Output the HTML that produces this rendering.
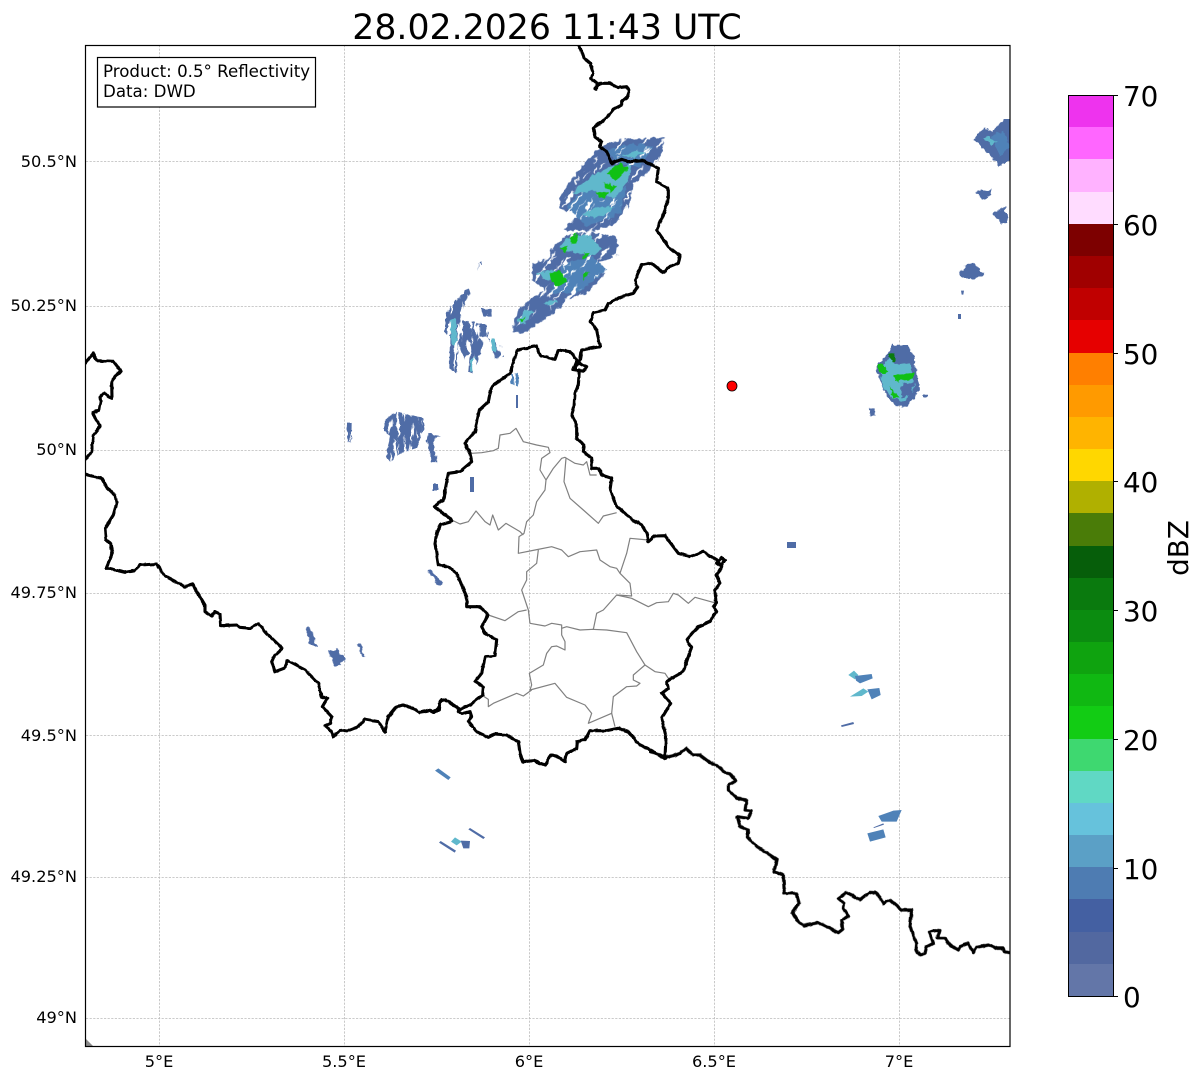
<!DOCTYPE html>
<html><head><meta charset="utf-8"><style>
html,body{margin:0;padding:0;background:#fff}
svg{display:block}
text{font-family:"DejaVu Sans","Liberation Sans",sans-serif;fill:#000}
.b{fill:none;stroke:#000;stroke-width:3.1;stroke-linejoin:round;stroke-linecap:round;vector-effect:non-scaling-stroke}
.g{fill:none;stroke:#808080;stroke-width:1.2;stroke-linejoin:round;vector-effect:non-scaling-stroke}
.t{font-size:16.2px}
.l{font-size:16.65px}
.c{font-size:27.8px}
.r1{fill:#4f6ca6}.r2{fill:#4f82b8}.r3{fill:#60b8cc}.r4{fill:#3ed870}.r5{fill:#10c014}.r6{fill:#0a7a0e}
</style></head><body>
<svg width="1202" height="1081" viewBox="0 0 1202 1081" xmlns="http://www.w3.org/2000/svg">
<defs>
<clipPath id="p"><rect x="86" y="45" width="924" height="1001"/></clipPath>
<filter id="j" filterUnits="userSpaceOnUse" x="0" y="0" width="1202" height="1081" color-interpolation-filters="sRGB">
<feTurbulence type="fractalNoise" baseFrequency="0.16 0.22" numOctaves="2" seed="4" result="n"/>
<feDisplacementMap in="SourceGraphic" in2="n" scale="6" xChannelSelector="R" yChannelSelector="G"/>
</filter>
<filter id="w" filterUnits="userSpaceOnUse" x="0" y="0" width="1202" height="1081" color-interpolation-filters="sRGB">
<feTurbulence type="fractalNoise" baseFrequency="0.16" numOctaves="2" seed="9" result="n"/>
<feDisplacementMap in="SourceGraphic" in2="n" scale="2.2" xChannelSelector="R" yChannelSelector="G"/>
<feGaussianBlur stdDeviation="0.35"/>
</filter>
<filter id="s" filterUnits="userSpaceOnUse" x="-1500" y="-1500" width="4000" height="4000" color-interpolation-filters="sRGB">
<feTurbulence type="fractalNoise" baseFrequency="0.05 0.3" numOctaves="2" seed="7" result="n"/>
<feColorMatrix in="n" type="matrix" values="0 0 0 0 0 0 0 0 0 0 0 0 0 0 0 16 0 0 0 -5.1" result="m"/>
<feComposite in="SourceGraphic" in2="m" operator="in" result="c"/>
<feTurbulence type="fractalNoise" baseFrequency="0.25" seed="3" result="d"/>
<feDisplacementMap in="c" in2="d" scale="6" xChannelSelector="R" yChannelSelector="G"/>
</filter>
<filter id="v" filterUnits="userSpaceOnUse" x="0" y="0" width="1202" height="1081" color-interpolation-filters="sRGB">
<feTurbulence type="fractalNoise" baseFrequency="0.3 0.05" numOctaves="2" seed="12" result="n"/>
<feColorMatrix in="n" type="matrix" values="0 0 0 0 0 0 0 0 0 0 0 0 0 0 0 16 0 0 0 -5.8" result="m"/>
<feComposite in="SourceGraphic" in2="m" operator="in" result="c"/>
<feTurbulence type="fractalNoise" baseFrequency="0.25" seed="5" result="d"/>
<feDisplacementMap in="c" in2="d" scale="4" xChannelSelector="R" yChannelSelector="G"/>
</filter>
</defs>
<rect width="1202" height="1081" fill="#fff"/>

<text x="547" y="39" style="font-size:34.7px" text-anchor="middle">28.02.2026 11:43 UTC</text>

<!-- grid -->
<g stroke="#bbb" stroke-width="0.8" stroke-dasharray="2.2 1.4" fill="none">
<path d="M159.500 45V1046M344.500 45V1046M529.500 45V1046M714.500 45V1046M899.500 45V1046"/>
<path d="M86 161.500H1010M86 306.500H1010M86 450.500H1010M86 593.500H1010M86 735.500H1010M86 877.500H1010M86 1018.500H1010"/>
</g>

<g clip-path="url(#p)">
<polygon points="85,1038 93,1046 85,1046" fill="#8a8a8a"/>
<!-- radar: main band, streaked along its axis -->
<g transform="rotate(-55 560 250)" filter="url(#s)">
<g transform="rotate(55 560 250)">
<g transform="translate(420,130) scale(.33333)">
<polygon class="r1" points="420,200 445,160 515,75 560,40 630,25 680,25 735,20 720,80 690,120 640,160 625,240 590,280 520,305 430,300 480,250 420,240"/>
<polygon class="r1" points="400,350 440,315 510,305 590,320 595,375 530,400 555,430 500,490 440,510 425,530 385,560 310,610 275,605 295,540 340,500 375,480 335,450 340,400 385,385"/>
<polygon class="r2" points="560,60 640,40 700,50 660,110 590,100"/>
<polygon class="r2" points="440,230 500,170 620,170 600,250 500,290"/>
<polygon class="r2" points="430,400 520,380 560,420 470,490 390,490"/>
</g></g></g>
<g transform="rotate(-55 560 250)" filter="url(#j)">
<g transform="rotate(55 560 250)">
<g transform="translate(420,130) scale(.33333)">
<polygon class="r3" points="455,190 520,135 570,110 635,105 625,155 580,205 520,180 470,190"/>
<polygon class="r3" points="490,250 530,232 580,232 555,255 505,265"/>
<polygon class="r3" points="600,78 640,65 680,68 640,82"/>
<polygon class="r3" points="415,350 450,320 510,315 545,360 510,382 470,368"/>
<polygon class="r3" points="350,430 400,418 440,445 420,465 375,445"/>
<polygon class="r3" points="370,520 408,508 415,518 380,528"/>
<polygon class="r3" points="292,578 312,538 342,545 310,585"/>
<polygon class="r5" points="560,130 600,98 625,115 590,155"/>
<polygon class="r5" points="548,155 592,170 572,188"/>
<polygon class="r5" points="525,185 565,188 550,208"/>
<polygon class="r5" points="448,322 478,312 472,342 452,342"/>
<polygon class="r5" points="418,356 442,348 436,368"/>
<polygon class="r5" points="488,370 507,373 490,388"/>
<polygon class="r5" points="390,430 415,418 428,438 442,456 410,468 392,452"/>
<polygon class="r5" points="488,436 507,428 490,452"/>
<polygon class="r5" points="298,572 316,558 310,578"/>
</g></g></g>
<!-- west cluster + vertical-streak blobs -->
<g filter="url(#v)">
<g transform="translate(420,130) scale(.33333)">
<polygon class="r1" points="70,600 75,560 95,520 145,475 150,490 130,530 125,570 200,585 205,620 255,660 255,680 225,685 205,620 175,620 190,640 170,700 160,730 145,725 150,660 135,690 115,640 110,730 88,715 90,620"/>
<polygon class="r3" points="88,570 108,565 112,650 95,645"/>
<polygon class="r3" points="150,690 168,678 162,725 150,725"/>
<polygon class="r1" points="185,535 215,540 215,560 190,560"/>
<polygon class="r1" points="175,400 188,395 175,420"/>
<polygon class="r2" points="275,730 295,730 297,768 272,762"/>
<polygon class="r3" points="212,625 224,625 230,670 216,660"/>
</g>
<g transform="translate(80,340) scale(.33333)">
<polygon class="r1" points="912,240 950,215 1030,235 1034,260 1010,325 960,340 930,365 918,350 930,290 912,275"/>
<polygon class="r1" points="1040,300 1045,280 1082,290 1062,300 1072,368 1056,368"/>
<polygon class="r1" points="800,248 815,248 814,308 804,308"/>
</g>
</g>
<g filter="url(#j)">
<g transform="translate(860,100) scale(.33333)">
<polygon class="r1" points="340,118 375,80 395,95 430,60 470,60 470,170 415,200 395,170"/>
<polygon class="r2" points="395,110 430,90 450,140 420,170"/>
<polygon class="r3" points="370,115 385,105 410,130 390,135"/>
<polygon class="r1" points="345,275 365,270 375,275 395,270 390,285 370,298"/>
<polygon class="r1" points="397,340 435,318 445,370 430,372 410,360"/>
<polygon class="r1" points="295,520 325,490 345,490 360,515 378,520 350,535 305,535"/>
<polygon class="r1" points="192,882 204,882 204,894 192,894"/>
<polygon class="r1" points="28,925 44,925 44,945 30,945"/>
<polygon class="r1" points="50,790 75,775 95,735 140,735 160,765 170,820 180,870 140,920 110,920 75,880 50,810"/>
<polygon class="r3" points="90,770 105,795 150,790 165,860 135,905 100,895 70,860 60,820"/>
<polygon class="r1" points="110,745 140,750 140,785 110,790"/>
<polygon class="r1" points="125,850 165,850 150,885 125,890"/>
<polygon class="r5" points="50,795 70,790 85,815 65,825"/>
<polygon class="r6" points="85,760 105,762 105,785 95,785"/>
<polygon class="r5" points="100,825 165,820 165,832 105,845"/>
<polygon class="r5" points="90,860 115,890 100,895"/>
</g>
<g transform="translate(80,340) scale(.33333)">
<polygon class="r1" points="1060,435 1075,435 1072,450 1062,450"/>
<polygon class="r1" points="1043,695 1055,690 1088,730 1080,738"/>
<polygon class="r1" points="680,860 690,860 712,925 705,925 685,905"/>
<polygon class="r1" points="745,935 770,925 798,960 775,978 765,975"/>
<polygon class="r1" points="830,912 842,910 853,950 848,953"/>
</g>
</g>
<g transform="translate(860,100) scale(.33333)">
<polygon class="r1" points="303,572 312,572 310,584 305,584"/>
<polygon class="r1" points="294,643 303,643 301,656 296,656"/>
</g>
<g transform="translate(830,660) scale(.33333)">
<polygon class="r3" points="55,45 72,32 85,45 75,58"/>
<polygon class="r2" points="75,48 125,42 128,55 90,70 78,62"/>
<polygon class="r3" points="60,110 100,85 115,95 95,108"/>
<polygon class="r2" points="112,88 148,84 152,105 125,118"/>
<polygon class="r1" points="33,196 70,186 72,192 35,201"/>
</g>
<g transform="translate(420,760) scale(.33333)">
<polygon class="r2" points="45,32 55,25 92,52 85,60"/>
<polygon class="r1" points="145,208 150,204 195,232 190,237"/>
<polygon class="r3" points="93,245 105,232 125,245 110,256"/>
<polygon class="r1" points="122,242 150,243 148,265 130,265"/>
<polygon class="r1" points="57,248 62,243 108,272 104,278"/>
</g>
<g transform="translate(650,740) scale(.33333)">
<polygon class="r2" points="685,228 730,212 755,210 740,245 695,245"/>
<polygon class="r1" points="670,262 700,250 702,254 672,264"/>
<polygon class="r2" points="652,280 700,268 707,292 660,305"/>
</g>
<rect x="470" y="477" width="4" height="15" class="r1"/>
<rect x="433" y="484" width="5" height="6" class="r1"/>
<rect x="787" y="542" width="9" height="6" class="r1"/>
<rect x="516" y="395" width="2" height="13" class="r1"/>
<rect x="958" y="314" width="3" height="5" class="r1"/>

<!-- gray district lines -->
<g transform="translate(420,410) scale(.33333)">
<path class="g" d="M95 330L120 342 145 335 168 303 195 335 210 345 218 315 235 360 258 340 300 365 310 375"/>
<path class="g" d="M155 130L185 128 220 122 235 115 240 75 270 70 288 55 310 95 350 105 385 112 390 128 365 145 360 180 378 210 400 175 425 145 435 142 465 160 490 165 500 155 510 195 530 195"/>
<path class="g" d="M378 210L375 240 350 275 340 315 320 335 312 370 297 380 295 430 345 420 395 410 425 420 445 440 480 425 530 420 540 450 570 470 590 475 600 490 620 430 630 385 685 390"/>
<path class="g" d="M438 145L432 215 450 265 490 300 535 340 550 318 590 308"/>
<path class="g" d="M600 490L630 520 635 558 590 555 550 600 530 610 520 658 480 660 440 650 425 655 425 645 395 640 375 648 330 640 325 600 305 540 320 510 320 485 350 460 355 420"/>
<path class="g" d="M205 615L255 632 295 605 320 600"/>
<path class="g" d="M590 555L635 565 685 590 710 578 745 575 760 550 775 555 805 580 825 562 890 580"/>
<path class="g" d="M515 658L560 660 620 668 650 725 675 765 705 785 735 790 745 805"/>
<path class="g" d="M425 655L425 675 435 695 435 720 410 708 395 710 380 730 370 765 328 790 335 825 330 840 405 820 440 862 495 885 515 910 505 940 575 910 585 950"/>
<path class="g" d="M675 765L640 795 640 810 660 820 650 828 620 830 580 860 575 910"/>
<path class="g" d="M185 855L205 868 205 890 220 880 290 850 310 858 335 840"/>
</g>

<!-- black borders -->
<g filter="url(#w)">
<g transform="translate(80,340) scale(.33333)">
<path class="b" d="M10 75L40 40 50 62 100 64 122 92 95 125 96 175 85 170 72 158 60 170 62 185 58 210 38 218 48 240 62 258 40 285 35 335 10 365"/>
<path class="b" d="M10 402L65 415 80 442 105 465 110 490 100 525 75 565 78 600 92 610 97 640 78 685 90 685 105 690 135 697 165 692 180 675 230 672 255 708 315 740 338 733 375 795 375 815 395 828 405 815 420 822 422 857 470 855 480 862 510 865 535 850 560 880 607 925 585 945 575 965 585 995 612 985 622 962 675 990 715 1030 725 1070 742 1075 727 1100 755 1130 752 1150 735 1157 755 1175 760 1190 780 1173 810 1170 835 1160 855 1138 895 1145 915 1175 925 1130 950 1100 970 1095 1005 1108 1020 1118 1048 1110 1060 1118 1078 1110 1080 1085 1095 1078 1135 1105"/>
</g>
<g transform="translate(420,410) scale(.33333)">
<path class="b" d="M0 908L30 900 40 908 58 890 65 870 75 870 120 898 115 905 125 912 150 905 155 920 145 935 170 965 205 982 225 972 260 975 295 995 300 1030 310 1055 340 1052 375 1065 392 1035 410 1038 435 1055 440 1030 470 1015 472 995 495 990 510 962 560 962 595 955 625 965 650 995 660 1005 700 1025 735 1045"/>
<path class="b" d="M735 1045L738 980 725 925 752 880 725 850 745 835 740 815 755 805 790 785 815 710 800 690 835 650 870 635 890 605 880 590 888 580 885 540 900 520 890 495 905 470 890 460 905 442 915 450 905 465 890 450 850 425 810 440 775 430 735 377 705 378 685 395 680 370 665 345 640 330 590 290 570 240 575 205 545 195 535 175 515 175 515 145 490 125 493 105 470 85 470 45 455 15 462 -10"/>
<path class="b" d="M178 0L165 65 135 100 150 130 155 155 120 185 85 190 70 270 42 290 90 325 95 335 60 345 50 370 45 400 55 465 85 470 110 490 140 560 140 590 180 590 205 615 185 650 195 670 230 690 225 738 195 740 185 790 165 815 190 830 188 855 150 885 120 898"/>
</g>
<g transform="translate(420,130) scale(.33333)">
<path class="b" d="M180 838L205 815 215 770 270 730 292 660 350 648 362 678 405 688 415 660 450 665 470 690"/>
<path class="b" d="M462 830L465 790 475 765 478 720 460 720 470 695 500 710 490 725 460 720 480 690 485 660 540 650 530 600 512 575 520 548 555 540 565 520 605 500 640 490 652 470 645 450 665 405 695 400 730 428 740 415 775 400 780 378 745 350 710 300 730 255 745 205 745 175 710 155 715 115"/>
</g>
<g transform="translate(560,40) scale(.33333)">
<path class="b" d="M50 5L68 40 72 55 90 70 100 100 92 115 110 130 108 148 105 145 120 130 150 130 175 143 200 140 208 150 200 172 185 185 185 195 160 208 140 232 100 265 105 290 125 305 118 320 140 335 155 370 185 358 210 365 250 362 295 385"/>
</g>
<g transform="translate(650,740) scale(.33333)">
<path class="b" d="M0 35L20 40 45 52 70 47 90 40 108 25 130 45 150 45 180 68 200 75 225 97 240 100 257 122 235 135 235 150 260 175 290 180 285 210 305 212 295 235 262 230 270 260 295 270 292 290 320 320 345 335 380 358 372 395 400 405 403 460 440 460 447 490 427 518 440 540 460 557 505 548 565 578 578 568 575 540 595 530 580 505 582 490 565 475 590 457 630 480 660 457 680 458 700 490 720 480 755 510 785 510 780 560 800 610 798 630 810 645 825 640 830 620 850 610 838 575 870 570 862 595 885 595 900 615 925 630 930 620 955 610 970 638 980 622 1015 615 1040 625 1060 625 1063 635 1090 640"/>
</g>
</g>
</g>

<circle cx="732" cy="386" r="5" fill="#f00" stroke="#000" stroke-width="0.8"/>

<!-- axes frame -->
<rect x="85.500" y="45.500" width="924.500" height="1001" fill="none" stroke="#000" stroke-width="1.2"/>

<!-- info box -->
<rect x="97.500" y="57.500" width="218" height="49.500" fill="#fff" stroke="#000" stroke-width="1.2"/>
<text x="103" y="77" class="l">Product: 0.5° Reflectivity</text>
<text x="103" y="97" class="l">Data: DWD</text>

<!-- lat labels -->
<g text-anchor="end">
<text x="77" y="167" class="t">50.5°N</text>
<text x="77" y="311" class="t">50.25°N</text>
<text x="77" y="455" class="t">50°N</text>
<text x="77" y="598" class="t">49.75°N</text>
<text x="77" y="741" class="t">49.5°N</text>
<text x="77" y="882" class="t">49.25°N</text>
<text x="77" y="1023" class="t">49°N</text>
</g>
<g text-anchor="middle">
<text x="159" y="1067" class="t">5°E</text>
<text x="344" y="1067" class="t">5.5°E</text>
<text x="529" y="1067" class="t">6°E</text>
<text x="714" y="1067" class="t">6.5°E</text>
<text x="899" y="1067" class="t">7°E</text>
</g>

<!-- colorbar -->
<g shape-rendering="crispEdges">
<rect x="1068" y="95" width="45" height="33" fill="#ee33ee"/>
<rect x="1068" y="127" width="45" height="33" fill="#ff66ff"/>
<rect x="1068" y="159" width="45" height="33" fill="#ffb2ff"/>
<rect x="1068" y="192" width="45" height="33" fill="#ffdcff"/>
<rect x="1068" y="224" width="45" height="33" fill="#7d0000"/>
<rect x="1068" y="256" width="45" height="33" fill="#a00000"/>
<rect x="1068" y="288" width="45" height="33" fill="#c00000"/>
<rect x="1068" y="320" width="45" height="33" fill="#e60000"/>
<rect x="1068" y="353" width="45" height="33" fill="#ff7f00"/>
<rect x="1068" y="385" width="45" height="33" fill="#ff9a00"/>
<rect x="1068" y="417" width="45" height="33" fill="#ffb400"/>
<rect x="1068" y="449" width="45" height="33" fill="#ffd700"/>
<rect x="1068" y="481" width="45" height="33" fill="#b0b000"/>
<rect x="1068" y="513" width="45" height="33" fill="#4a7c08"/>
<rect x="1068" y="546" width="45" height="33" fill="#065e0a"/>
<rect x="1068" y="578" width="45" height="33" fill="#0a7a0e"/>
<rect x="1068" y="610" width="45" height="33" fill="#0b8c10"/>
<rect x="1068" y="642" width="45" height="33" fill="#0fa30f"/>
<rect x="1068" y="674" width="45" height="33" fill="#10b812"/>
<rect x="1068" y="706" width="45" height="33" fill="#12cc14"/>
<rect x="1068" y="739" width="45" height="33" fill="#3ed870"/>
<rect x="1068" y="771" width="45" height="33" fill="#60d8c4"/>
<rect x="1068" y="803" width="45" height="33" fill="#66c2dc"/>
<rect x="1068" y="835" width="45" height="33" fill="#5ba0c6"/>
<rect x="1068" y="867" width="45" height="33" fill="#4e7cb2"/>
<rect x="1068" y="899" width="45" height="33" fill="#4460a2"/>
<rect x="1068" y="932" width="45" height="33" fill="#5268a0"/>
<rect x="1068" y="964" width="45" height="32" fill="#6376a8"/>
</g>
<rect x="1068.500" y="95.500" width="45" height="901" fill="none" stroke="#000" stroke-width="1"/>
<path d="M1113 95.500h5M1113 224.500h5M1113 353.500h5M1113 481.500h5M1113 610.500h5M1113 739.500h5M1113 868.500h5M1113 996.500h5" stroke="#000" stroke-width="1"/>
<g>
<text x="1123" y="106" class="c">70</text>
<text x="1123" y="235" class="c">60</text>
<text x="1123" y="364" class="c">50</text>
<text x="1123" y="492" class="c">40</text>
<text x="1123" y="621" class="c">30</text>
<text x="1123" y="750" class="c">20</text>
<text x="1123" y="879" class="c">10</text>
<text x="1123" y="1007" class="c">0</text>
</g>
<text transform="translate(1188,548) rotate(-90)" text-anchor="middle" class="c">dBZ</text>
</svg>
</body></html>
